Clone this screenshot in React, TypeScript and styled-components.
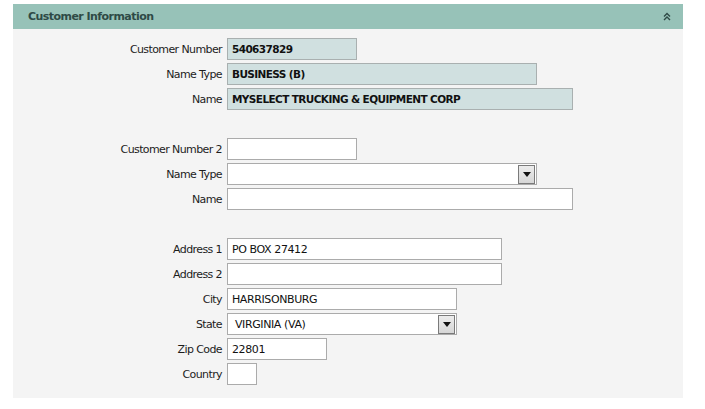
import styled, { createGlobalStyle } from 'styled-components';

const GlobalStyle = createGlobalStyle`
  html, body {
    margin: 0;
    padding: 0;
    background: #ffffff;
  }
  body {
    font-family: "DejaVu Sans", Verdana, sans-serif;
    font-size: 11px;
    color: #1c1c1c;
  }
`;

const Page = styled.div`
  padding: 4px 22px 0 13px;
`;

const Panel = styled.section`
  width: 670px;
  background: #f4f4f4;
`;

const Header = styled.div`
  height: 25px;
  background: #97c2b8;
  display: flex;
  align-items: center;
  justify-content: space-between;
  padding: 0 12px 0 15px;
  box-sizing: border-box;
`;

const HeaderTitle = styled.h3`
  margin: 0;
  font-size: 11px;
  font-weight: bold;
  color: #2e4a46;
  letter-spacing: -0.55px;
`;

const CollapseIcon = styled.svg`
  width: 8px;
  height: 9px;
  display: block;
`;

const Body = styled.div`
  padding: 9px 0 13px;
  display: flex;
  flex-direction: column;
  gap: 3px;
`;

const Row = styled.div`
  display: flex;
  align-items: center;
  height: 22px;
  gap: 5px;
`;

const Spacer = styled.div`
  height: 22px;
`;

const Label = styled.label`
  width: 209px;
  text-align: right;
  white-space: nowrap;
  letter-spacing: -0.6px;
`;

const Field = styled.div<{ $w: number; $readOnly?: boolean }>`
  width: ${p => p.$w}px;
  height: 22px;
  box-sizing: border-box;
  border: 1px solid ${p => (p.$readOnly ? '#a9b0b0' : '#ababab')};
  background: ${p => (p.$readOnly ? '#d0e0e0' : '#ffffff')};
  display: flex;
  align-items: center;
  padding: 0 4px;
  font-weight: ${p => (p.$readOnly ? 'bold' : 'normal')};
  font-size: ${p => (p.$readOnly ? '10.5px' : '11px')};
  letter-spacing: ${p => (p.$readOnly ? '-0.6px' : '-0.4px')};
  color: #111;
  white-space: nowrap;
  overflow: hidden;
`;

const Select = styled(Field)`
  justify-content: space-between;
  padding: 0 1px 0 7px;
`;

const DropButton = styled.div`
  width: 17px;
  height: 19px;
  box-sizing: border-box;
  border: 1px solid #7a7a7a;
  background: linear-gradient(#ececec, #d6d6d6);
  display: flex;
  align-items: center;
  justify-content: center;
`;

const Arrow = styled.div`
  width: 0;
  height: 0;
  border-left: 4px solid transparent;
  border-right: 4px solid transparent;
  border-top: 5px solid #111;
`;

type Item =
  | { kind: 'spacer' }
  | { kind: 'field'; label: string; width: number; value?: string; readOnly?: boolean; select?: boolean };

const items: Item[] = [
  { kind: 'field', label: 'Customer Number', width: 130, value: '540637829', readOnly: true },
  { kind: 'field', label: 'Name Type', width: 310, value: 'BUSINESS (B)', readOnly: true },
  { kind: 'field', label: 'Name', width: 346, value: 'MYSELECT TRUCKING & EQUIPMENT CORP', readOnly: true },
  { kind: 'spacer' },
  { kind: 'field', label: 'Customer Number 2', width: 130 },
  { kind: 'field', label: 'Name Type', width: 310, select: true },
  { kind: 'field', label: 'Name', width: 346 },
  { kind: 'spacer' },
  { kind: 'field', label: 'Address 1', width: 275, value: 'PO BOX 27412' },
  { kind: 'field', label: 'Address 2', width: 275 },
  { kind: 'field', label: 'City', width: 230, value: 'HARRISONBURG' },
  { kind: 'field', label: 'State', width: 230, value: 'VIRGINIA (VA)', select: true },
  { kind: 'field', label: 'Zip Code', width: 100, value: '22801' },
  { kind: 'field', label: 'Country', width: 30 },
];

export default function App() {
  return (
    <>
      <GlobalStyle />
      <Page>
        <Panel>
          <Header>
            <HeaderTitle>Customer Information</HeaderTitle>
            <CollapseIcon viewBox="0 0 8 9">
              <path d="M1 4.5 L4 1.5 L7 4.5 M1 8 L4 5 L7 8" fill="none" stroke="#2e4a46" strokeWidth="1.4" />
            </CollapseIcon>
          </Header>
          <Body>
            {items.map((it, i) =>
              it.kind === 'spacer' ? (
                <Spacer key={i} />
              ) : (
                <Row key={i}>
                  <Label>{it.label}</Label>
                  {it.select ? (
                    <Select $w={it.width}>
                      <span>{it.value}</span>
                      <DropButton>
                        <Arrow />
                      </DropButton>
                    </Select>
                  ) : (
                    <Field $w={it.width} $readOnly={it.readOnly}>
                      {it.value}
                    </Field>
                  )}
                </Row>
              )
            )}
          </Body>
        </Panel>
      </Page>
    </>
  );
}
